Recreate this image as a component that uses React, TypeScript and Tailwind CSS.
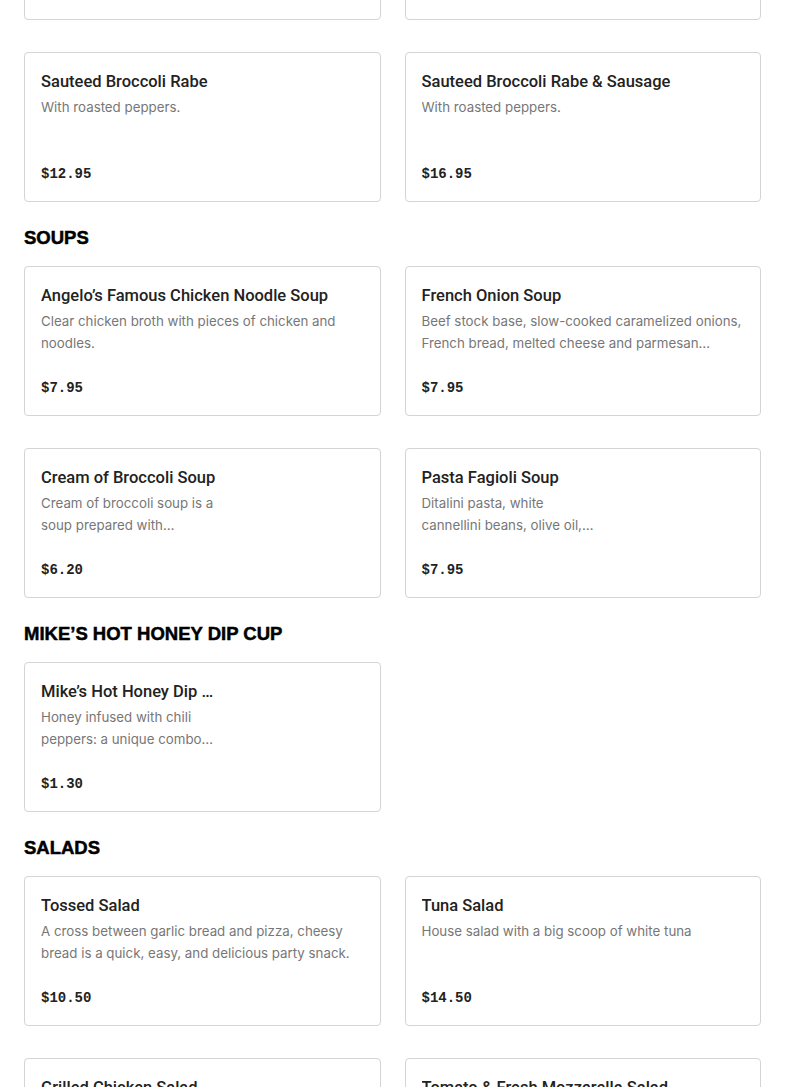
type Item = {
  name: string;
  description?: string;
  price: string;
  narrow?: boolean;
};

type Section = {
  title?: string;
  items: Item[];
  // first group is only partly on screen (page is scrolled)
  partial?: boolean;
};

const sections: Section[] = [
  {
    partial: true,
    items: [
      { name: "Sauteed Spinach", description: "With garlic and oil.", price: "$10.95" },
      { name: "Sauteed Spinach & Sausage", description: "With garlic and oil.", price: "$14.95" },
    ],
  },
  {
    items: [
      { name: "Sauteed Broccoli Rabe", description: "With roasted peppers.", price: "$12.95" },
      { name: "Sauteed Broccoli Rabe & Sausage", description: "With roasted peppers.", price: "$16.95" },
    ],
  },
  {
    title: "Soups",
    items: [
      {
        name: "Angelo’s Famous Chicken Noodle Soup",
        description: "Clear chicken broth with pieces of chicken and noodles.",
        price: "$7.95",
      },
      {
        name: "French Onion Soup",
        description:
          "Beef stock base, slow-cooked caramelized onions, French bread, melted cheese and parmesan cheese baked to perfection.",
        price: "$7.95",
      },
      {
        name: "Cream of Broccoli Soup",
        description:
          "Cream of broccoli soup is a soup prepared with broccoli, stock and milk or cream as primary ingredients.",
        price: "$6.20",
        narrow: true,
      },
      {
        name: "Pasta Fagioli Soup",
        description:
          "Ditalini pasta, white cannellini beans, olive oil, garlic, onion and tomato in a light broth.",
        price: "$7.95",
        narrow: true,
      },
    ],
  },
  {
    title: "Mike’s Hot Honey Dip Cup",
    items: [
      {
        name: "Mike’s Hot Honey Dip Cup",
        description:
          "Honey infused with chili peppers: a unique combo of sweet and heat for your pizza crust.",
        price: "$1.30",
        narrow: true,
      },
    ],
  },
  {
    title: "Salads",
    items: [
      {
        name: "Tossed Salad",
        description:
          "A cross between garlic bread and pizza, cheesy bread is a quick, easy, and delicious party snack.",
        price: "$10.50",
      },
      {
        name: "Tuna Salad",
        description: "House salad with a big scoop of white tuna",
        price: "$14.50",
      },
      {
        name: "Grilled Chicken Salad",
        description: "House salad topped with grilled chicken breast.",
        price: "$14.50",
      },
      {
        name: "Tomato & Fresh Mozzarella Salad",
        description: "Sliced tomatoes, fresh mozzarella, basil and olive oil.",
        price: "$13.50",
      },
    ],
  },
];

function MenuCard({ item }: { item: Item }) {
  return (
    <div className="flex h-[150px] flex-col justify-between rounded-[4px] border border-[#d4d4d4] bg-white p-4">
      <div className={item.narrow ? "w-[176px]" : ""}>
        <h3 className="truncate font-['Roboto',sans-serif] text-[16.5px] font-medium leading-[26px] text-[#222]">
          {item.name}
        </h3>
        <p className="mt-px line-clamp-2 text-[13.3px] leading-[22px] text-[#777]">
          {item.description}
        </p>
      </div>
      <p className="font-['Liberation_Mono',monospace] text-[14px] font-bold leading-[22px] text-[#222]">
        {item.price}
      </p>
    </div>
  );
}

export default function App() {
  return (
    <div className="min-h-screen bg-white px-6 font-['Inter',sans-serif]">
      {sections.map((section, i) => (
        <section
          key={i}
          className={section.partial ? "-mt-[130px]" : section.title ? "mt-6" : "mt-8"}
        >
          {section.title && (
            <h2 className="mb-4 font-['Liberation_Sans',Arial,sans-serif] text-[18.5px] font-bold uppercase leading-6 text-black [-webkit-text-stroke:0.5px_#000]">
              {section.title}
            </h2>
          )}
          <div className="grid grid-cols-2 gap-x-6 gap-y-8">
            {section.items.map((item) => (
              <MenuCard key={item.name} item={item} />
            ))}
          </div>
        </section>
      ))}
    </div>
  );
}
